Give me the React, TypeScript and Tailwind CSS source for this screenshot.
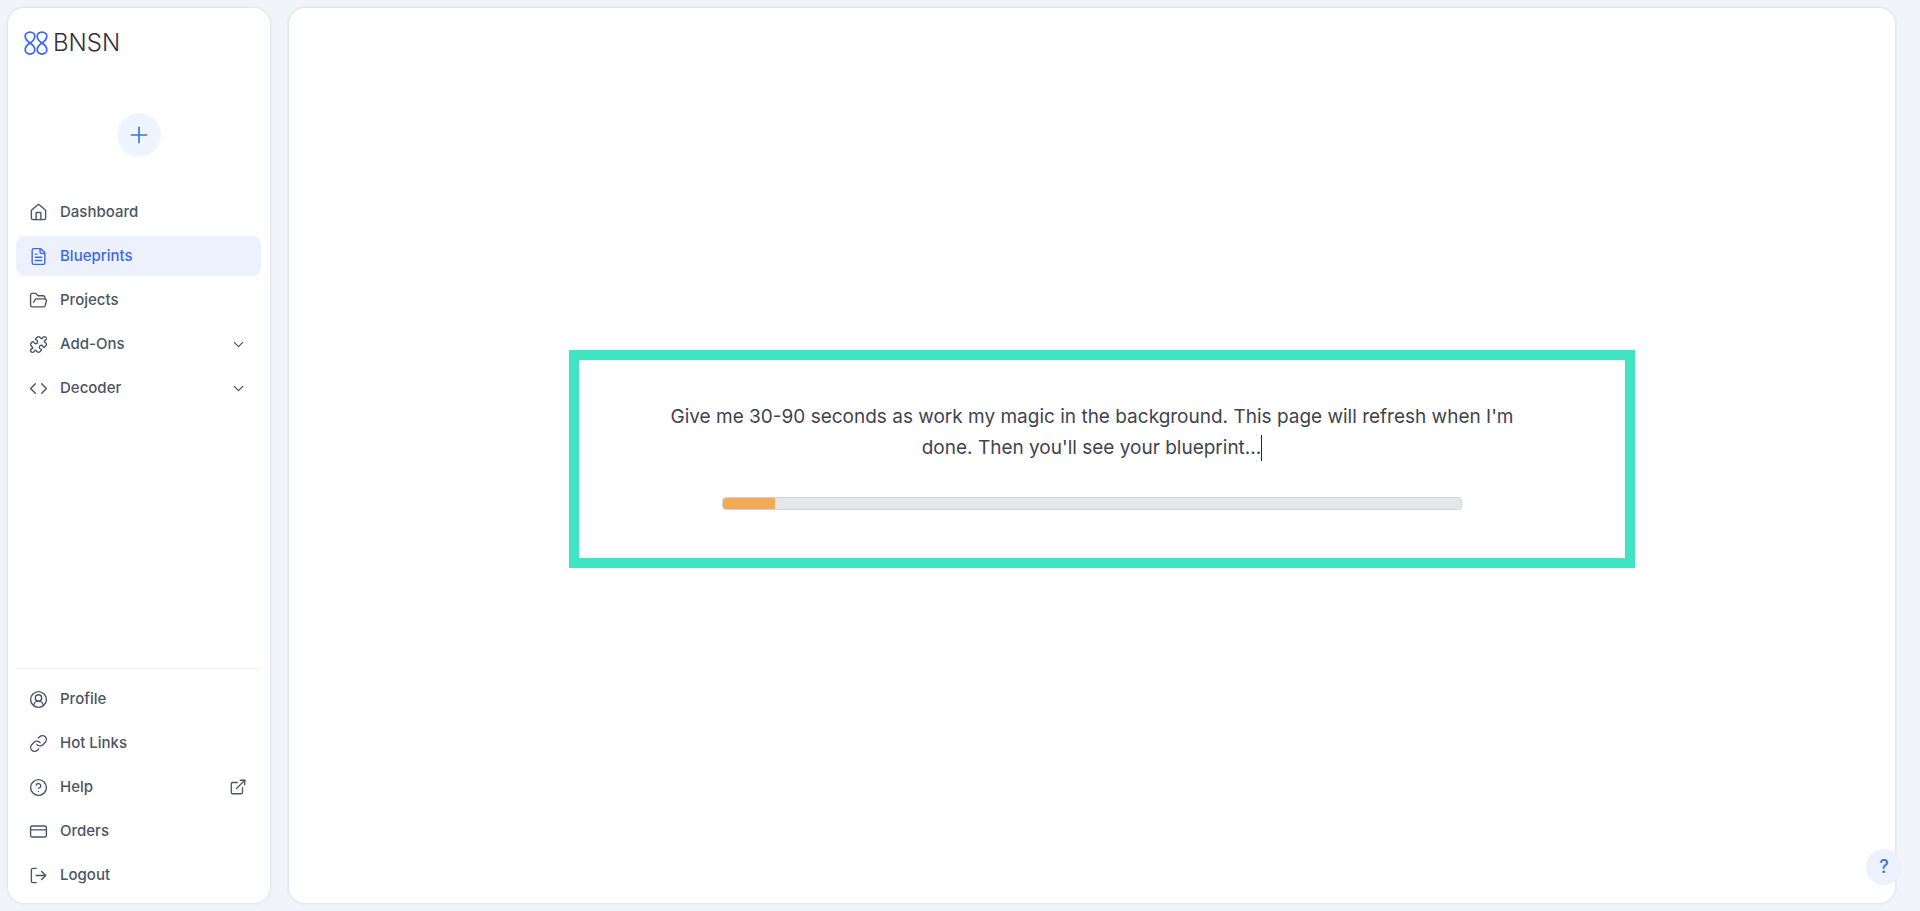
import React from "react";
import {
  ChevronDown,
  CircleHelp,
  CircleUserRound,
  Code,
  CreditCard,
  ExternalLink,
  FileText,
  FolderOpen,
  House,
  Link,
  LogOut,
  Plus,
  Puzzle,
} from "lucide-react";

type NavItemProps = {
  label: string;
  icon: React.ElementType;
  active?: boolean;
  trailing?: React.ReactNode;
};

const NavItem = ({ label, icon: Icon, active, trailing }: NavItemProps) => {
  return (
    <div
      className={`flex items-center h-10 pl-[13px] pr-[14px] rounded-lg text-[15px] font-medium ${
        active ? "bg-[#ecf1fd] text-[#3b66ee]" : "text-[#4b5563]"
      }`}
    >
      <Icon size={19} strokeWidth={1.75} className="shrink-0" />
      <span className="ml-3 flex-1">{label}</span>
      {trailing}
    </div>
  );
};

const Logo = () => {
  return (
    <div className="flex items-center h-6 ml-[8px]">
      <svg width="24" height="24" viewBox="0 0 24 24" fill="none" stroke="#3b66f5" strokeWidth="1.75">
        <path d="M6 1C3 1 1.2 3 1.2 5.2C1.2 7.8 3.6 10.4 6 12C8.6 10.4 10.8 7.8 10.8 5.2C10.8 3 9 1 6 1Z" />
        <path d="M18 1C15 1 13.2 3 13.2 5.2C13.2 7.8 15.4 10.4 18 12C20.4 10.4 22.8 7.8 22.8 5.2C22.8 3 21 1 18 1Z" />
        <path d="M6 23C3 23 1.2 21 1.2 18.8C1.2 16.2 3.6 13.6 6 12C8.6 13.6 10.8 16.2 10.8 18.8C10.8 21 9 23 6 23Z" />
        <path d="M18 23C15 23 13.2 21 13.2 18.8C13.2 16.2 15.4 13.6 18 12C20.4 13.6 22.8 16.2 22.8 18.8C22.8 21 21 23 18 23Z" />
      </svg>
      <span className="ml-[5px] text-[24px] font-light leading-none text-[#33313a]">BNSN</span>
    </div>
  );
};

const Sidebar = () => {
  const chevron = <ChevronDown size={17} strokeWidth={1.75} />;

  return (
    <aside className="w-[262px] shrink-0 flex flex-col bg-white rounded-2xl shadow-[0_0_3px_rgba(148,163,184,0.4)] pl-2 pr-[9px] pt-[23px] pb-2">
      <Logo />

      <div className="flex justify-center mt-[58px]">
        <div className="w-11 h-11 rounded-full bg-[#eff5fe] text-[#3b72d9] flex items-center justify-center">
          <Plus size={26} strokeWidth={1.5} />
        </div>
      </div>

      <nav className="mt-[35px] flex flex-col gap-1">
        <NavItem label="Dashboard" icon={House} />
        <NavItem label="Blueprints" icon={FileText} active />
        <NavItem label="Projects" icon={FolderOpen} />
        <NavItem label="Add-Ons" icon={Puzzle} trailing={chevron} />
        <NavItem label="Decoder" icon={Code} trailing={chevron} />
      </nav>

      <div className="mt-auto border-t border-[#eef0f4] pt-[10px] flex flex-col gap-1">
        <NavItem label="Profile" icon={CircleUserRound} />
        <NavItem label="Hot Links" icon={Link} />
        <NavItem label="Help" icon={CircleHelp} trailing={<ExternalLink size={18} strokeWidth={1.75} />} />
        <NavItem label="Orders" icon={CreditCard} />
        <NavItem label="Logout" icon={LogOut} />
      </div>
    </aside>
  );
};

const App = () => {
  return (
    <div className="h-screen flex gap-[19px] bg-[#f1f4f9] pl-2 pr-[25px] py-2 font-['Inter',sans-serif]">
      <Sidebar />

      <main className="flex-1 flex items-center justify-center bg-white rounded-2xl shadow-[0_0_3px_rgba(148,163,184,0.4)] pl-5 pt-[6px]">
        <div className="w-[1066px] h-[218px] border-[10px] border-[#40e3c2] flex flex-col items-center pt-[41px] pr-5">
          <p className="w-[860px] text-center text-[19px] leading-[31px] text-[#3f4350]">
            Give me 30-90 seconds as work my magic in the background. This page will refresh when I'm done. Then
            you'll see your blueprint...
            <span className="inline-block w-px h-[26px] bg-[#1f2937] align-middle" />
          </p>
          <div className="w-[740px] h-[13px] mt-[34px] bg-[#e5e7eb] border border-[#d1d5db] rounded-[4px] overflow-hidden">
            <div className="w-[52px] h-full bg-[#f4a955]" />
          </div>
        </div>
      </main>

      <div className="fixed right-[18px] bottom-[26px] w-9 h-9 rounded-full bg-[#ecf1fd] text-[#3b72d9] flex items-center justify-center text-lg font-medium">
        ?
      </div>
    </div>
  );
};

export default App;
